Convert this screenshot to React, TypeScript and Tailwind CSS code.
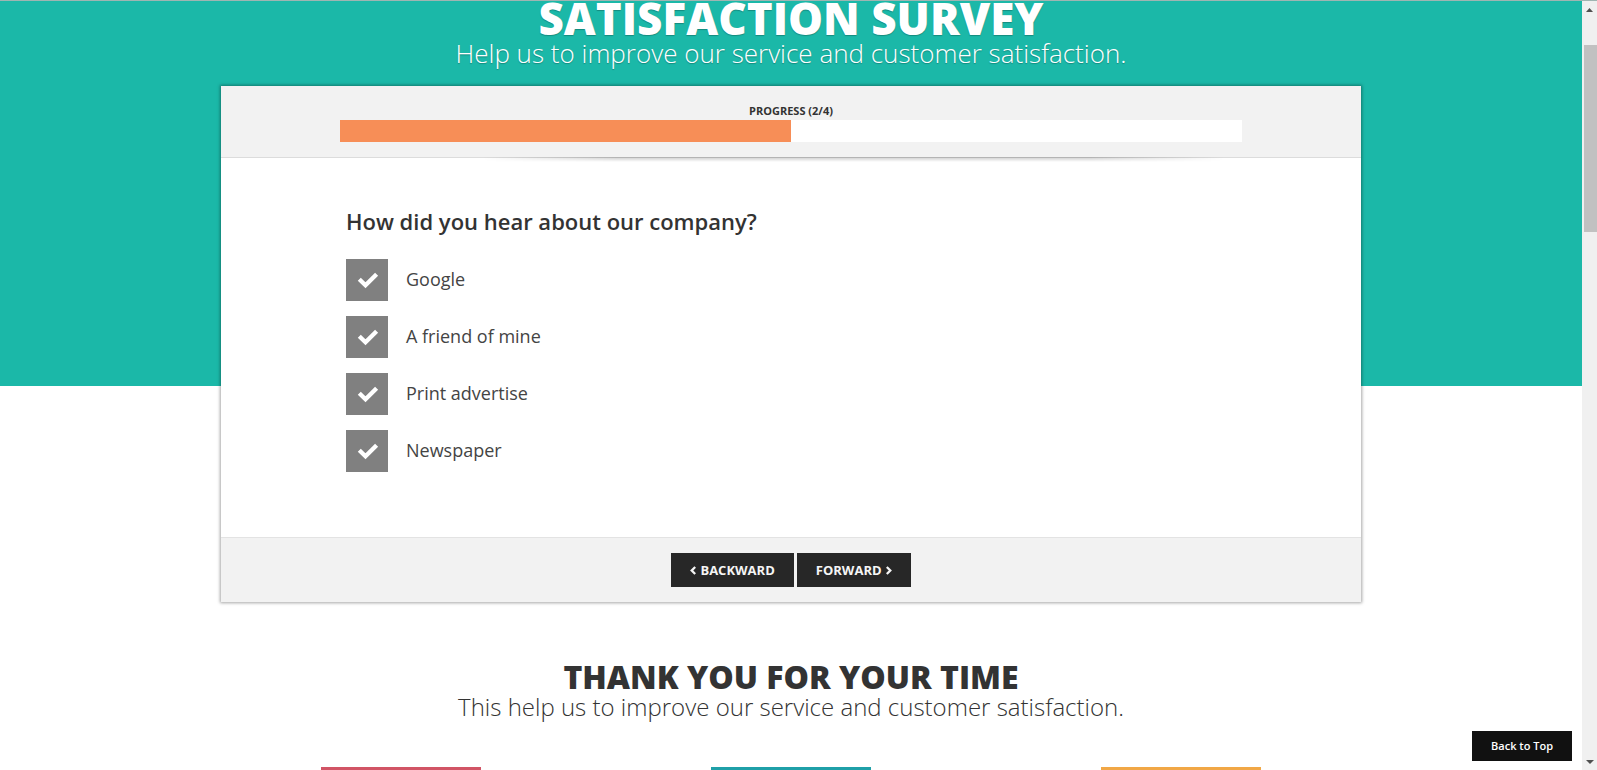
import React from "react";

const sources = ["Google", "A friend of mine", "Print advertise", "Newspaper"];

function Tick() {
  return (
    <svg viewBox="0 0 42 42" className="pointer-events-none col-start-1 row-start-1 size-[42px]" aria-hidden="true">
      <path d="M13.300 20.300 L19.500 26.300 L30.600 15.300" fill="none" stroke="#fff" strokeWidth="4.300" strokeLinejoin="miter" />
    </svg>
  );
}

function Chevron({ flip = false }: { flip?: boolean }) {
  return (
    <svg viewBox="0 0 6 9" className={flip ? "h-[9px] w-[6px] rotate-180" : "h-[9px] w-[6px]"} aria-hidden="true">
      <path d="M5.200 1 L1.700 4.500 L5.200 8" fill="none" stroke="currentColor" strokeWidth="2.300" />
    </svg>
  );
}

function ScrollRail() {
  return (
    <div className="flex w-[15px] shrink-0 flex-col items-end bg-[#f0f0f0]" aria-hidden="true">
      <svg viewBox="0 0 15 44" className="h-[44px] w-[15px] shrink-0 fill-[#505050]">
        <path d="M4 11 L7.500 7 L11 11 Z" />
      </svg>
      <div className="h-[187px] w-[13px] bg-[#c1c1c1]" />
      <svg viewBox="0 0 15 15" className="mt-auto h-[15px] w-[15px] shrink-0 fill-[#505050]">
        <path d="M4 5 L12 5 L8 9 Z" />
      </svg>
    </div>
  );
}

export default function App() {
  return (
    <div className="flex h-screen overflow-hidden border-t border-[#9fb5b2] bg-white font-['Open_Sans',sans-serif] text-[#333]">
      <main className="relative min-w-0 flex-1 overflow-hidden">
        <div className="absolute inset-x-0 top-0 h-[385px] bg-[#1bb8a8]" />

        <div className="relative mx-auto flex max-w-[1140px] flex-col">
          <header className="text-center text-white [text-shadow:0_1px_1px_rgba(0,0,0,0.25)]">
            <h1 className="-mt-[5px] text-[44px] leading-[44px] font-extrabold">SATISFACTION SURVEY</h1>
            <p className="text-[26px] leading-[26px] font-light">Help us to improve our service and customer satisfaction.</p>
          </header>

          <form className="mt-[20px] bg-white shadow-[0_0_3px_1px_rgba(0,0,0,0.35)]" onSubmit={(e) => e.preventDefault()}>
            <div className="relative border-b border-[#dcdcdc] bg-[#f2f2f2] px-[119px] pt-[17px] pb-[15px]">
              <p id="progress-label" className="pb-[1px] text-center text-[11px] leading-[16px] font-bold">PROGRESS (2/4)</p>
              <div role="progressbar" aria-labelledby="progress-label" aria-valuemin={0} aria-valuemax={4} aria-valuenow={2} className="h-[22px] bg-white">
                <div className="h-full w-1/2 bg-[#f78e57]" />
              </div>
              <div className="absolute right-[12%] left-[23%] top-full h-[5px] bg-linear-to-b from-black/20 to-transparent [mask-image:linear-gradient(to_right,transparent,black_18%,black_82%,transparent)]" />
            </div>

            <fieldset className="px-[125px] pt-[47px] pb-[65px]">
              <legend className="float-left mb-[22px] w-full text-[22px] leading-[32px] font-semibold">How did you hear about our company?</legend>
              <div className="clear-both flex flex-col gap-[15px]">
                {sources.map((name) => (
                  <label key={name} className="flex items-center gap-[18px] text-[18px] leading-[24px] text-[#444]">
                    <span className="grid size-[42px]">
                      <input type="checkbox" defaultChecked className="col-start-1 row-start-1 size-[42px] appearance-none bg-[#808080]" />
                      <Tick />
                    </span>
                    <span className="pb-[2px]">{name}</span>
                  </label>
                ))}
              </div>
            </fieldset>

            <div className="flex justify-center gap-[3px] border-t border-[#e3e3e3] bg-[#f2f2f2] pt-[15px] pb-[15px] text-[13px] leading-[18px] font-bold text-[#f5f5f5]">
              <button type="button" className="flex items-center gap-1 bg-[#272727] px-[19px] py-2"><Chevron />BACKWARD</button>
              <button type="submit" className="flex items-center gap-1 bg-[#272727] px-[19px] py-2">FORWARD<Chevron flip /></button>
            </div>
          </form>

          <section className="mt-[58px] text-center">
            <h2 className="text-[32px] leading-[34px] font-extrabold">THANK YOU FOR YOUR TIME</h2>
            <p className="text-[24px] leading-[26px] font-light">This help us to improve our service and customer satisfaction.</p>
          </section>
        </div>

        <div className="relative mx-auto mt-[47px] grid max-w-[1170px] grid-cols-3 justify-items-center">
          <div className="h-[160px] w-[160px] bg-[#d15465]" />
          <div className="h-[160px] w-[160px] bg-[#1fa0a8]" />
          <div className="h-[160px] w-[160px] bg-[#f1a746]" />
        </div>

        <a href="#top" className="absolute right-[10px] bottom-[9px] bg-[#111] px-[19px] py-[6px] text-[11px] leading-[18px] font-semibold text-white">Back to Top</a>
      </main>
      <ScrollRail />
    </div>
  );
}
